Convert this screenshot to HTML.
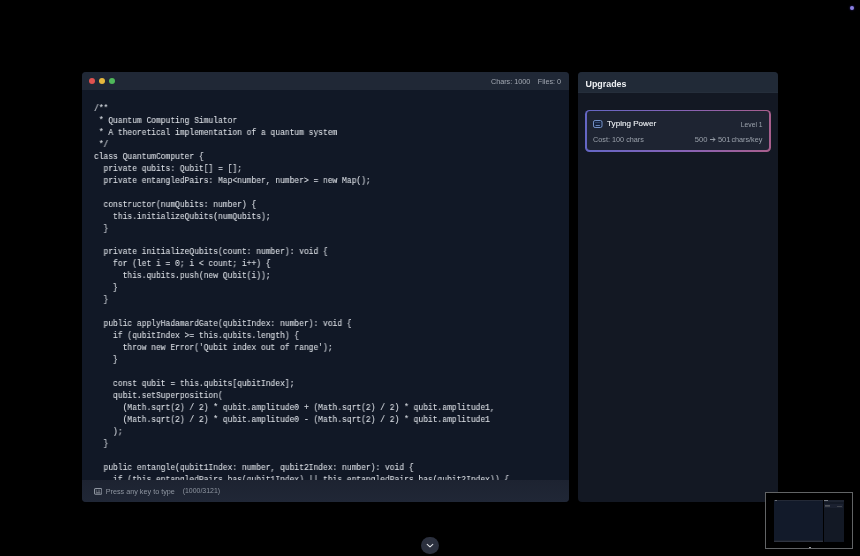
<!DOCTYPE html>
<html><head><meta charset="utf-8">
<style>
*{margin:0;padding:0;box-sizing:border-box}
html,body{width:860px;height:556px;background:#000;overflow:hidden;font-family:"Liberation Sans",sans-serif}
.panel{will-change:transform;position:absolute;left:82px;top:72px;width:487px;height:430px;background:#111826;border-radius:4px;overflow:hidden}
.phead{position:absolute;left:0;top:0;width:100%;height:18px;background:#202836}
.dot{position:absolute;top:6px;width:6px;height:6px;border-radius:50%}
.stats{position:absolute;right:8px;top:5px;font-size:7.25px;color:#a3a9b3;white-space:pre}
pre{position:absolute;left:11.5px;top:32px;will-change:transform;font-family:"Liberation Mono",monospace;font-size:9px;line-height:11.96px;color:#d9dde3;-webkit-text-stroke:0.12px #d9dde3;white-space:pre;transform:scaleX(0.8833);transform-origin:0 0}
.pfoot{position:absolute;left:0;top:408px;width:100%;height:22px;background:linear-gradient(180deg,#1d2331,#202736)}
.pfoot .t{position:absolute;top:7px;font-size:7.24px;color:#8e95a0;white-space:pre}
.up{will-change:transform;position:absolute;left:578px;top:72px;width:200px;height:430px;background:#131823;border-radius:4px;overflow:hidden}
.uhead{position:absolute;left:0;top:0;width:100%;height:21px;background:#212a37;border-bottom:1px solid #252e3b}
.uhead .t{position:absolute;left:7.5px;top:6.5px;font-size:8.9px;font-weight:bold;color:#eef0f3}
.card{position:absolute;left:7px;top:37.8px;width:186px;height:42.2px;border-radius:4.5px;background:linear-gradient(90deg,#6466c4,#8862b4 55%,#a85e8c)}
.card .in{position:absolute;left:1.6px;top:1.6px;right:1.6px;bottom:1.6px;background:#1e2432;border-radius:3px}
.ct{position:absolute;font-size:8.1px;color:#e6e9ed;-webkit-text-stroke:0.15px #e6e9ed;white-space:pre}
.cs{position:absolute;font-size:7.25px;color:#9aa1ab;white-space:pre}
.mini{position:absolute;left:765.4px;top:491.6px;width:87.6px;height:57.2px;border:1.1px solid #626466;background:#000;overflow:hidden}
.mini div{position:absolute}
.chev{position:absolute;left:420.9px;top:536.5px;width:17.8px;height:17.8px;border-radius:50%;background:#2b303e}
.pdot{position:absolute;left:850px;top:5.9px;width:4.2px;height:4.2px;border-radius:50%;background:#8b80e0;box-shadow:0 0 2px #3a30a0}
</style></head><body>
<div class="panel">
  <div class="phead">
    <div class="dot" style="left:7.1px;background:#e0524f"></div>
    <div class="dot" style="left:17.1px;background:#e6b83d"></div>
    <div class="dot" style="left:27.1px;background:#4fb85a"></div>
    <div class="stats" style="left:408.9px;right:auto">Chars: 1000</div><div class="stats" style="right:7.9px">Files: 0</div>
  </div>
<pre>/**
 * Quantum Computing Simulator
 * A theoretical implementation of a quantum system
 */
class QuantumComputer {
  private qubits: Qubit[] = [];
  private entangledPairs: Map&lt;number, number&gt; = new Map();

  constructor(numQubits: number) {
    this.initializeQubits(numQubits);
  }

  private initializeQubits(count: number): void {
    for (let i = 0; i &lt; count; i++) {
      this.qubits.push(new Qubit(i));
    }
  }

  public applyHadamardGate(qubitIndex: number): void {
    if (qubitIndex &gt;= this.qubits.length) {
      throw new Error('Qubit index out of range');
    }

    const qubit = this.qubits[qubitIndex];
    qubit.setSuperposition(
      (Math.sqrt(2) / 2) * qubit.amplitude0 + (Math.sqrt(2) / 2) * qubit.amplitude1,
      (Math.sqrt(2) / 2) * qubit.amplitude0 - (Math.sqrt(2) / 2) * qubit.amplitude1
    );
  }

  public entangle(qubit1Index: number, qubit2Index: number): void {
    if (this.entangledPairs.has(qubit1Index) || this.entangledPairs.has(qubit2Index)) {
</pre>
  <div class="pfoot">
    <svg style="position:absolute;left:11.8px;top:7.8px" width="8.4" height="7" viewBox="0 0 8.4 7"><rect x="0.55" y="0.55" width="7.3" height="5.7" rx="1.1" fill="none" stroke="#8e95a0" stroke-width="1.1"/><rect x="2.3" y="1.6" width="0.7" height="2.4" fill="#6a707a"/><rect x="3.85" y="1.6" width="0.7" height="2.4" fill="#6a707a"/><rect x="5.4" y="1.6" width="0.7" height="2.4" fill="#6a707a"/><rect x="2" y="4.4" width="4.4" height="0.9" fill="#9aa0aa"/></svg>
    <div class="t" style="left:23.7px">Press any key to type</div><div class="t" style="left:100.7px;font-size:6.95px;top:7.2px">(1000/3121)</div>
  </div>
</div>
<div class="up">
  <div class="uhead"><div class="t">Upgrades</div></div>
  <div class="card"><div class="in">
    <svg style="position:absolute;left:6.9px;top:8.5px" width="10" height="9" viewBox="0 0 10 9"><rect x="0.5" y="0.5" width="8.5" height="7" rx="1.6" fill="#16223d" stroke="#7b9ad0" stroke-width="0.95"/><rect x="2.2" y="2.3" width="5.1" height="0.7" fill="#3d5682"/><rect x="2.6" y="5" width="4.3" height="0.9" fill="#6f8fc4"/></svg>
    <div class="ct" style="left:20.5px;top:8px">Typing Power</div>
    <div class="cs" style="right:6.8px;top:9.3px;font-size:6.75px">Level 1</div>
    <div class="cs" style="left:6.5px;top:24px">Cost: 100 chars</div>
    <div class="cs" style="left:108.2px;top:23.8px;font-size:7.6px">500</div><svg style="position:absolute;left:123.4px;top:25.4px" width="6" height="5" viewBox="0 0 6 5"><path d="M0.4 2.5 H5 M3 0.6 L5 2.5 L3 4.4" fill="none" stroke="#9aa1ab" stroke-width="0.95" stroke-linecap="round" stroke-linejoin="round"/></svg><div class="cs" style="left:131.3px;top:23.8px;font-size:7.6px">501</div><div class="cs" style="right:7px;top:24px">chars/key</div>
  </div></div>
</div>
<div class="mini">
  <div style="left:7.5px;top:7px;width:48.7px;height:42.9px;background:#121a2a"></div>
  <div style="left:7.5px;top:7px;width:48.7px;height:1.2px;background:#232936"></div>
  <div style="left:8.2px;top:7.3px;width:2.5px;height:0.6px;background:#6a6e76"></div>
  <div style="left:7.5px;top:47.8px;width:48.7px;height:2.1px;background:#1b212d"></div>
  <div style="left:7.5px;top:48.3px;width:48.7px;height:0.6px;background:#2f3440"></div>
  <div style="left:57.2px;top:7px;width:20px;height:42.9px;background:#131925"></div>
  <div style="left:57.2px;top:7px;width:20px;height:2.2px;background:#1d2330"></div>
  <div style="left:57.9px;top:7.7px;width:4px;height:0.8px;background:#7a7e86"></div>
  <div style="left:58.1px;top:11.5px;width:18.6px;height:4.2px;background:#1b2130"></div>
  <div style="left:58.9px;top:12.2px;width:5px;height:0.5px;background:#50545c"></div>
  <div style="left:59.1px;top:13.6px;width:5px;height:0.5px;background:#40444c"></div>
  <div style="left:70.9px;top:13.6px;width:5px;height:0.5px;background:#40444c"></div>
  <div style="left:42.3px;top:54.3px;width:2px;height:1.2px;background:#9a9ca0"></div>
</div>
<div class="chev"><svg style="position:absolute;left:0;top:0" width="17.8" height="17.8" viewBox="0 0 17.8 17.8"><path d="M6.2 7.3 L9 9.9 L11.8 7.3" fill="none" stroke="#e5e7eb" stroke-width="1.05" stroke-linecap="round" stroke-linejoin="round"/></svg></div>
<div class="pdot"></div>
</body></html>
